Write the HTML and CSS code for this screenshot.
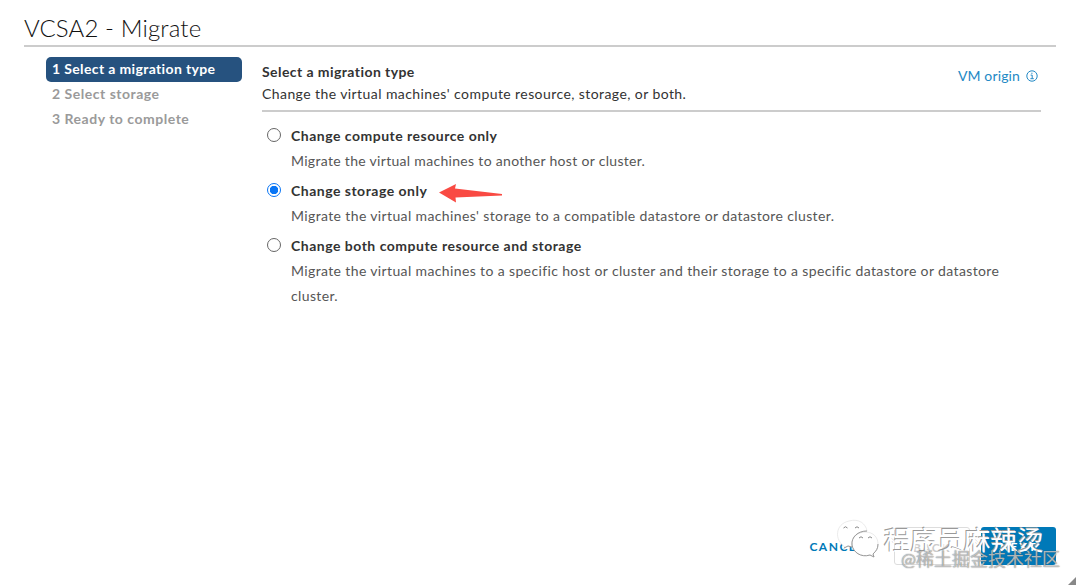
FILE: index.html
```html
<!DOCTYPE html>
<html lang="en">
<head>
<meta charset="utf-8">
<title>VCSA2 - Migrate</title>
<link rel="stylesheet" href="styles.css">
</head>
<body>
<main class="wizard">
  <h1 class="title"><span>VCSA2 - Migrate</span></h1>
  <div class="body">
    <ol class="steps">
      <li class="step active">1 Select a migration type</li>
      <li class="step">2 Select storage</li>
      <li class="step">3 Ready to complete</li>
    </ol>
    <section class="content">
      <header class="head">
        <div>
          <h2 class="heading"><span>Select a migration type</span></h2>
          <p class="lead"><span>Change the virtual machines' compute resource, storage, or both.</span></p>
        </div>
        <a class="origin"><span>VM origin</span>
          <svg class="info" viewBox="0 0 12 12"><circle cx="6" cy="6" r="5.2"/><path d="M4.6 5.1H6.2V8.6M4.4 8.7H7.8M5.9 2.7V3.9"/></svg>
        </a>
      </header>
      <div class="options">
        <div class="option">
          <i class="radio"></i>
          <div><div class="label"><span>Change compute resource only</span></div>
          <p class="desc short">Migrate the virtual machines to another host or cluster.</p></div>
        </div>
        <div class="option">
          <i class="radio checked"></i>
          <div><div class="label"><span>Change storage only</span>
            <svg class="arrow" viewBox="0 0 66 20"><path d="M1 9.5L18 1L17 5.5L64 11V12.5L17.5 14.5L18 19.5Z"/></svg></div>
          <p class="desc">Migrate the virtual machines' storage to a compatible datastore or datastore cluster.</p></div>
        </div>
        <div class="option">
          <i class="radio"></i>
          <div><div class="label"><span>Change both compute resource and storage</span></div>
          <p class="desc">Migrate the virtual machines to a specific host or cluster and their storage to a specific datastore or datastore cluster.</p></div>
        </div>
      </div>
    </section>
  </div>
  <footer class="footer">
    <span class="btn cancel">CANCEL</span>
    <span class="btn back">BACK</span>
    <span class="btn next">NEXT</span>
  </footer>
</main>
<svg class="wechat" viewBox="0 0 46 40">
  <path class="bubble" d="M9 29C-2 22 -1 6 13 3C23 0 30 6 31 13C22 13 15 19 16 29L12 28L7 31Z"/>
  <path class="bubble" d="M29 14C38 14 42 20 42 26C42 31 40 33 37 36L38 39L34 37C24 40 16 33 16 26C16 19 22 14 29 14Z"/>
  <path class="shade" d="M8 30L12 28L16 29M31 13C22 13 15 19 16 27C17 34 25 40 34 37L38 39L37 36C40 33 42 31 42 26"/>
  <path class="eye" d="M7.500 10Q9.500 7.500 11.500 10M19 10Q21 7.500 23 10M23 20Q25 17.500 27 20M32 20Q34 17.500 36 20"/>
</svg>
<div class="mark name">程序员麻辣烫</div>
<div class="mark site">@稀土掘金技术社区</div>
<svg class="grip" viewBox="0 0 10 10"><path d="M9 1V9H1Z"/></svg>
</body>
</html>
```
FILE: styles.css
```css
* { box-sizing: border-box; }
body { margin: 0; width: 1080px; height: 588px; overflow: hidden; background: #fff; color: #333; font: 14px/25px Lato, "Noto Sans CJK SC", sans-serif; }
h1, h2, p, ol { margin: 0; padding: 0; }
.wizard { height: 588px; padding: 10px 24px 23px; display: flex; flex-direction: column; }
.title { height: 37px; font-size: 24px; line-height: 35px; font-weight: 300; color: #111; letter-spacing: .13px; border-bottom: 2px solid #ccc; }
.body { flex: 1; display: flex; }
.steps { list-style: none; margin-left: 22px; width: 196px; padding-top: 10px; }
.step { height: 25px; line-height: 24px; padding-left: 6px; font-weight: 700; color: #9a9a9a; border-radius: 5px; letter-spacing: .52px; }
.active { background: #26527f; color: #fff; letter-spacing: .36px; }
.content { width: 779px; margin-left: 20px; }
.head { height: 65px; display: flex; justify-content: space-between; border-bottom: 2px solid #ccc; padding-top: 13px; }
.heading { font-size: 14px; line-height: 23px; font-weight: 700; letter-spacing: .43px; }
.lead { line-height: 22px; letter-spacing: .42px; }
.origin { display: flex; gap: 6px; height: 30px; align-items: center; color: #2389c5; padding-right: 3px; letter-spacing: .13px; }
.info { width: 12px; height: 12px; margin-top: 1px; fill: none; stroke: currentColor; }
.options { padding: 11px 0 0 5px; }
.option { display: flex; gap: 10px; margin-bottom: 5px; }
.radio { width: 14px; height: 14px; flex: none; margin-top: 5px; border: 1px solid #666; border-radius: 50%; }
.checked { border: 1.5px solid #0875f5; background: radial-gradient(circle, #0875f5 0 4px, #fff 4.5px); }
.label { display: flex; font-weight: 700; letter-spacing: .5px; }
.desc { color: #565656; letter-spacing: .37px; }
.short { letter-spacing: .31px; }
.arrow { width: 66px; height: 20px; margin: 5px 0 0 11px; fill: #f94a43; }
.footer { display: flex; justify-content: flex-end; height: 38px; }
.btn { height: 38px; line-height: 40px; font-size: 12px; letter-spacing: 1.5px; border-radius: 3px; text-align: center; font-weight: 700; }
.cancel { color: #0079b8; margin-right: 29px; }
.back { width: 76px; border: 1px solid #ddd; color: #ccc; margin-right: 11px; }
.next { width: 75px; background: #0079b8; color: #fff; }
.wechat { position: absolute; left: 836px; top: 518px; width: 46px; height: 40px; }
.bubble { fill: #fff; stroke: #ddd; stroke-width: .6; }
.shade { fill: none; stroke: #999; }
.eye { fill: none; stroke: #888; }
.mark { position: absolute; white-space: nowrap; }
.name { left: 884px; top: 520px; font-size: 26.6px; line-height: 40px; color: #fff; text-shadow: -1px -1px 0 #999; }
.site { left: 901px; top: 547px; font-size: 18px; line-height: 25px; color: #fff9; text-shadow: 0 0 1px #444; }
.grip { position: absolute; left: 1067px; top: 576px; width: 10px; height: 10px; fill: #888; }
```
